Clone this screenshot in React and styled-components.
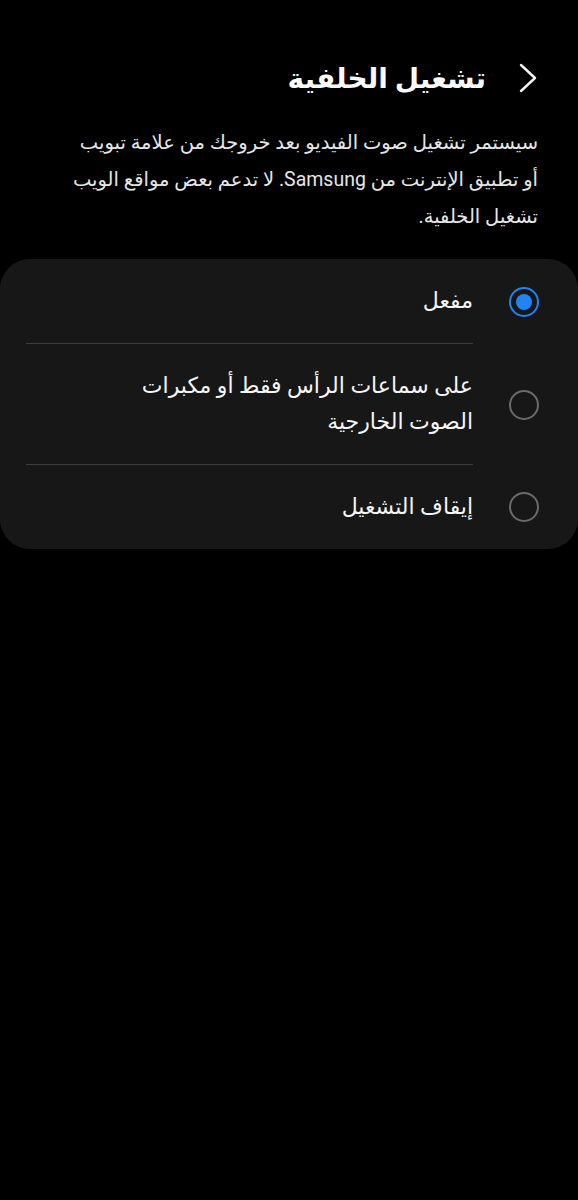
import React, { useState } from "react";
import styled, { createGlobalStyle } from "styled-components";

const GlobalStyle = createGlobalStyle`
  html, body {
    margin: 0;
    padding: 0;
    background: #000;
  }
  body {
    font-family: "Roboto", "Noto Sans", "DejaVu Sans", sans-serif;
    color: #fafafa;
  }
`;

const options = [
  { id: "on", label: "مفعل" },
  { id: "headphones", label: "على سماعات الرأس فقط أو مكبرات\nالصوت الخارجية" },
  { id: "off", label: "إيقاف التشغيل" },
];

function App() {
  const [selected, setSelected] = useState("on");
  return (
    <Page dir="rtl">
      <GlobalStyle />
      <Header>
        <BackButton aria-label="رجوع">
          <svg width="18" height="30" viewBox="0 0 18 30" fill="none">
            <path
              d="M2 2 L16 15 L2 28"
              stroke="#f2f2f2"
              strokeWidth="2.4"
              strokeLinecap="round"
              strokeLinejoin="round"
            />
          </svg>
        </BackButton>
        <Title>تشغيل الخلفية</Title>
      </Header>
      <Description>
        {"سيستمر تشغيل صوت الفيديو بعد خروجك من علامة تبويب\nأو تطبيق الإنترنت من Samsung. لا تدعم بعض مواقع الويب\nتشغيل الخلفية."}
      </Description>
      <Card>
        {options.map((o, i) => (
          <Row key={o.id} onClick={() => setSelected(o.id)}>
            <Radio $checked={selected === o.id} />
            <Label $divider={i < options.length - 1}>{o.label}</Label>
          </Row>
        ))}
      </Card>
    </Page>
  );
}

export default App;

const Page = styled.div`
  min-height: 1200px;
  background: #000;
  padding-top: 58px;
`;

const Header = styled.div`
  display: flex;
  align-items: center;
  gap: 32px;
  padding: 0 40px 0 0;
  height: 40px;
`;

const BackButton = styled.button`
  display: flex;
  align-items: center;
  justify-content: center;
  background: none;
  border: none;
  padding: 0;
  width: 20px;
  cursor: pointer;
`;

const Title = styled.h1`
  margin: 0;
  font-size: 28px;
  font-weight: 700;
  color: #fafafa;
`;

const Description = styled.p`
  margin: 26px 40px 0 30px;
  font-size: 19.5px;
  line-height: 37px;
  color: #e6e6e6;
  white-space: pre-line;
`;

const Card = styled.div`
  margin-top: 24px;
  background: #171717;
  border-radius: 30px;
  padding: 0 39px 0 26px;
`;

const Row = styled.div`
  display: flex;
  align-items: stretch;
  gap: 36px;
  cursor: pointer;
`;

const Radio = styled.span`
  flex: none;
  align-self: center;
  width: 30px;
  height: 30px;
  box-sizing: border-box;
  border-radius: 50%;
  border: 2.5px solid ${(p) => (p.$checked ? "#2183f5" : "#6b6b6b")};
  display: flex;
  align-items: center;
  justify-content: center;

  &::after {
    content: "";
    width: 16px;
    height: 16px;
    border-radius: 50%;
    background: ${(p) => (p.$checked ? "#2183f5" : "transparent")};
  }
`;

const Label = styled.div`
  flex: 1;
  display: flex;
  align-items: center;
  min-height: 83px;
  padding: 24px 0;
  box-sizing: border-box;
  font-size: 22px;
  line-height: 36px;
  color: #f5f5f5;
  white-space: pre-line;
  border-bottom: ${(p) => (p.$divider ? "1px solid #3d3d3d" : "none")};
`;
